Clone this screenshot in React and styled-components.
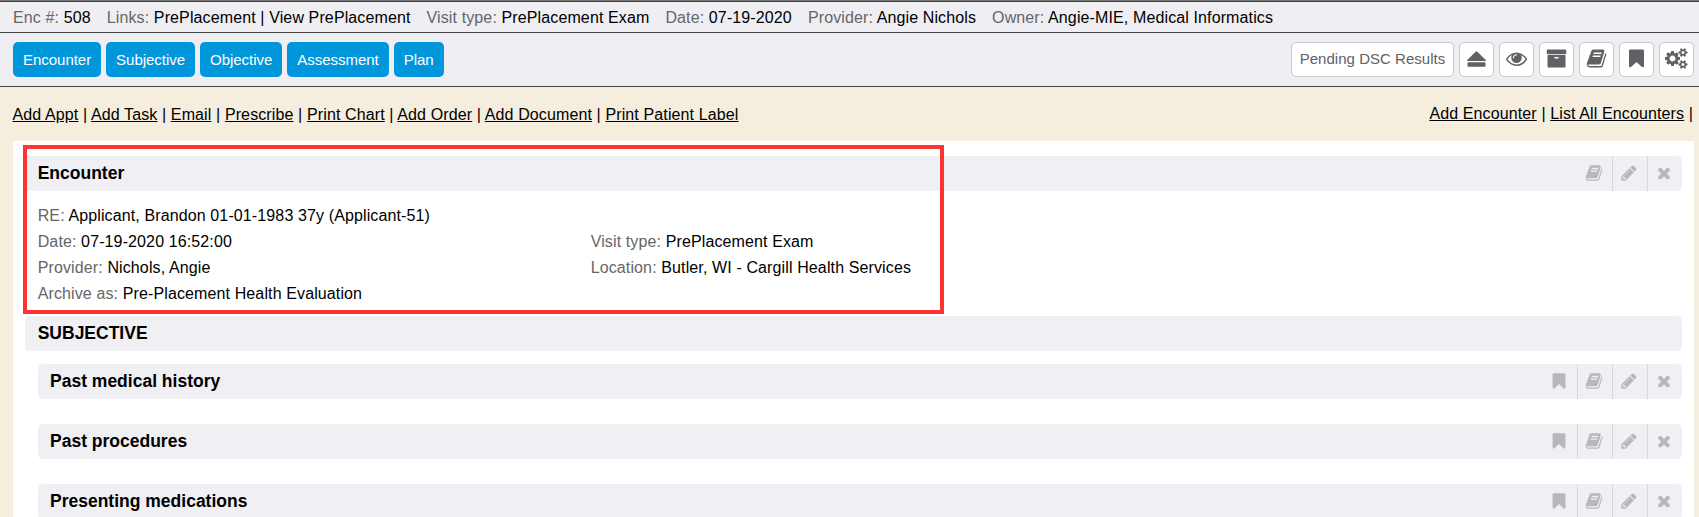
import React from "react";
import styled, { createGlobalStyle } from "styled-components";

const GlobalStyle = createGlobalStyle`
  * { box-sizing: border-box; }
  html, body { margin: 0; height: 100%; overflow: hidden; }
  body {
    background: #f5eddd;
    color: #000;
    font: 16px/26px Arial, "Liberation Sans", sans-serif;
    letter-spacing: 0.12px;
  }
`;

const Page = styled.div`
  position: relative;
  height: 517px;
  overflow: hidden;
`;

const InfoBar = styled.header`
  display: flex;
  gap: 16px;
  height: 33px;
  padding: 2px 13px 0;
  line-height: 30px;
  white-space: nowrap;
  background: #efeef3;
  border-top: 1px solid #777;
  border-bottom: 1px solid #444;
  box-shadow: inset 0 1px #444;
`;

const Label = styled.span`
  color: #666;
`;

const Toolbar = styled.nav`
  display: flex;
  justify-content: space-between;
  height: 54px;
  padding: 9px 5px 0 13px;
  background: #efeef3;
  border-bottom: 1px solid #444;
`;

const Group = styled.div`
  display: flex;
  gap: 5px;
`;

const Button = styled.button`
  height: 35px;
  padding: 0 10px;
  border: 0;
  border-radius: 5px;
  background: #0096db;
  color: #fff;
  font: 15px/35px Arial, "Liberation Sans", sans-serif;
  letter-spacing: -0.03px;
  white-space: nowrap;
`;

const OutlineButton = styled(Button)`
  display: flex;
  align-items: center;
  justify-content: center;
  width: ${(p) => p.$width || 35}px;
  padding: 0 0 2px;
  border: 1px solid #c8c8cc;
  background: #fff;
  color: #606164;
  letter-spacing: 0.03px;
  line-height: 33px;
`;

const LinkBar = styled.div`
  display: flex;
  justify-content: space-between;
  height: 54px;
  padding: 14px 6px 0 12.5px;
  white-space: nowrap;
`;

const LinkGroup = styled.div`
  padding-top: ${(p) => p.$drop || 0}px;
`;

const Link = styled.a`
  color: #000;
  text-decoration: underline;
`;

const Sheet = styled.main`
  height: 400px;
  margin: 0 5px 0 13px;
  padding: 15px 12px 0;
  background: #fff;
`;

const SectionHeader = styled.div`
  display: flex;
  justify-content: space-between;
  height: 35px;
  margin-left: ${(p) => (p.$nested ? 13 : 0)}px;
  margin-bottom: ${(p) => p.$after || 0}px;
  padding-left: ${(p) => (p.$nested ? 12 : 12.7)}px;
  border-radius: 5px;
  background: #f0eff4;
`;

const Title = styled.h2`
  margin: 0;
  font-size: 17.5px;
  line-height: 34px;
  letter-spacing: 0;
`;

const Actions = styled.div`
  display: flex;
`;

const Action = styled.span`
  display: flex;
  align-items: center;
  justify-content: center;
  width: 35px;
  padding: 0 2px 2px 0;
  color: #b8b7bc;

  & + & {
    border-left: 1px solid #d8d8dc;
  }
`;

const Details = styled.div`
  display: grid;
  grid-template-columns: 553px 1fr;
  grid-auto-rows: 26px;
  height: 125px;
  padding: 12px 13px 0 12.7px;
`;

const Field = styled.div`
  grid-column: ${(p) => (p.$wide ? "1 / -1" : "auto")};
  white-space: nowrap;
`;

const Highlight = styled.div`
  position: absolute;
  top: 145px;
  left: 23px;
  width: 921px;
  height: 169px;
  border: 4px solid #ff3333;
`;

const smallCog = "v140q0 16-149 31-12 27-30 52 51 113 51 138 0 4-4 7-122 71-124 71-8 0-46-47t-52-68q-20 2-30 2t-30-2q-14 21-52 68t-46 47q-2 0-124-71-4-3-4-7 0-25 51-138-18-25-30-52-149-15-149-31v-140q0-16 149-31 13-29 30-52-51-113-51-138 0-4 4-7 4-2 35-20t59-34 30-16q8 0 46 46.5t52 67.5q20-2 30-2t30 2q51-71 92-112l6-2q4 0 124 70 4 3 4 7 0 25-51 138 17 23 30 52 149 15 149 31z";

const paths = {
  eject: "M110 1024l711-711q31-31 75-31t75 31l711 711q31 31 19 57t-56 26h-1498q-44 0-56-26t19-57zM192 1216h1408q64 0 64 64v256q0 64-64 64h-1408q-64 0-64-64v-256q0-64 64-64z",
  eye: "M1664 960q-152-236-381-353 61 104 61 225 0 185-131.5 316.5t-316.5 131.5-316.5-131.5-131.5-316.5q0-121 61-225-229 117-381 353 133 205 333.5 326.5t434.5 121.5 434.5-121.5 333.5-326.5zm-720-384q0-20-14-34t-34-14q-125 0-214.5 89.5t-89.5 214.5q0 20 14 34t34 14 34-14 14-34q0-86 61-147t147-61q20 0 34-14t14-34zm848 384q0 34-20 69-140 230-376.5 368.5t-499.5 138.5-499.5-139-376.5-368q-20-35-20-69t20-69q140-229 376.5-368t499.5-139 499.5 139 376.5 368q20 35 20 69z",
  archive: "M1088 832q0-26-19-45t-45-19h-256q-26 0-45 19t-19 45 19 45 45 19h256q26 0 45-19t19-45zm576-192v960q0 26-19 45t-45 19h-1408q-26 0-45-19t-19-45v-960q0-26 19-45t45-19h1408q26 0 45 19t19 45zm64-448v256q0 26-19 45t-45 19h-1536q-26 0-45-19t-19-45v-256q0-26 19-45t45-19h1536q26 0 45 19t19 45z",
  book: "M1703 478q40 57 18 129l-275 906q-19 64-76.5 107.5t-122.5 43.5h-923q-77 0-148.5-53.5t-99.5-131.5q-24-67-2-127 0-4 3-27t4-37q1-8-3-21.5t-3-19.5q2-11 8-21t16.5-23.5 16.5-23.5q23-38 45-91.5t30-91.5q3-10 .5-30t-.5-28q3-11 17-28t17-23q21-36 42-92t25-90q1-9-2.5-32t.5-28q4-13 22-30.5t22-22.5q19-26 42.5-84.5t27.5-96.5q1-8-3-25.5t-2-26.5q2-8 9-18t18-23 17-21q8-12 16.5-30.5t15-35 16-36 19.5-32 26.5-23.5 36-11.5 47.5 5.5l-1 3q38-9 51-9h761q74 0 114 56t18 130l-274 906q-36 119-71.5 153.5t-128.5 34.5h-869q-27 0-38 15-11 16-1 43 24 70 144 70h923q29 0 56-15.5t35-41.5l300-987q7-22 5-57 38 15 59 43zm-1064 2q-4 13 2 22.5t20 9.5h608q13 0 25.5-9.5t16.5-22.5l21-64q4-13-2-22.5t-20-9.5h-608q-13 0-25.5 9.5t-16.5 22.5zm-83 256q-4 13 2 22.5t20 9.5h608q13 0 25.5-9.5t16.5-22.5l21-64q4-13-2-22.5t-20-9.5h-608q-13 0-25.5 9.5t-16.5 22.5z",
  bookmark: "M1420 128q23 0 44 9 33 13 52.5 41t19.5 62v1289q0 34-19.5 62t-52.5 41q-19 8-44 8-48 0-83-32l-441-424-441 424q-36 33-83 33-23 0-44-9-33-13-52.5-41t-19.5-62v-1289q0-34 19.5-62t52.5-41q21-9 44-9h1048z",
  cogs: "M832 896q0-106-75-181t-181-75-181 75-75 181 75 181 181 75 181-75 75-181zm768 512q0-52-38-90t-90-38-90 38-38 90q0 53 37.5 90.5t90.5 37.5 90.5-37.5 37.5-90.5zm0-1024q0-52-38-90t-90-38-90 38-38 90q0 53 37.5 90.5t90.5 37.5 90.5-37.5 37.5-90.5zm-384 421v185q0 10-7 19.5t-16 10.5l-155 24q-11 35-32 76 34 48 90 115 7 11 7 20 0 12-7 19-23 30-82.5 89.5t-78.5 59.5q-11 0-21-7l-115-90q-37 19-77 31-11 108-23 155-7 24-30 24h-186q-11 0-20-7.5t-10-17.5l-23-153q-34-10-75-31l-118 89q-7 7-20 7-11 0-21-8-144-133-144-160 0-9 7-19 10-14 41-53t47-61q-23-44-35-82l-152-24q-10-1-17-9.5t-7-19.5v-185q0-10 7-19.5t16-10.5l155-24q11-35 32-76-34-48-90-115-7-11-7-20 0-12 7-20 22-30 82-89t79-59q11 0 21 7l115 90q34-18 77-32 11-108 23-154 7-24 30-24h186q11 0 20 7.5t10 17.5l23 153q34 10 75 31l118-89q8-7 20-7 11 0 21 8 144 133 144 160 0 8-7 19-12 16-42 54t-45 60q23 48 34 82l152 23q10 2 17 10.5t7 19.5z" + "M1856 1338" + smallCog + "M1856 314" + smallCog,
  pencil: "M491 1536l91-91-235-235-91 91v107h128v128h107zm523-928q0-22-22-22-10 0-17 7l-542 542q-7 7-7 17 0 22 22 22 10 0 17-7l542-542q7-7 7-17zm-54-192l416 416-832 832h-416v-416zm683 96q0 53-37 90l-166 166-416-416 166-165q36-38 90-38 53 0 91 38l235 234q37 39 37 91z",
  times: "M1490 1322q0 40-28 68l-136 136q-28 28-68 28t-68-28l-294-294-294 294q-28 28-68 28t-68-28l-136-136q-28-28-28-68t28-68l294-294-294-294q-28-28-28-68t28-68l136-136q28-28 68-28t68 28l294 294 294-294q28-28 68-28t68 28l136 136q28 28 28 68t-28 68l-294 294 294 294q28 28 28 68z",
};

function Icon({ name, size }) {
  const wide = name === "cogs";
  const units = wide ? 1920 : 1792;
  return (
    <svg width={(size * units) / 1792} height={size} viewBox={`${wide ? -64 : 0} 0 ${units} 1792`} fill="currentColor" aria-hidden="true">
      <path d={paths[name]} />
    </svg>
  );
}

const visit = [
  ["Enc #:", "508"],
  ["Links:", "PrePlacement | View PrePlacement"],
  ["Visit type:", "PrePlacement Exam"],
  ["Date:", "07-19-2020"],
  ["Provider:", "Angie Nichols"],
  ["Owner:", "Angie-MIE, Medical Informatics"],
];
const jumps = ["Encounter", "Subjective", "Objective", "Assessment", "Plan"];
const tools = ["eject", "eye", "archive", "book", "bookmark", "cogs"];
const leftLinks = ["Add Appt", "Add Task", "Email", "Prescribe", "Print Chart", "Add Order", "Add Document", "Print Patient Label"];
const rightLinks = ["Add Encounter", "List All Encounters"];
const fields = [
  ["RE:", "Applicant, Brandon 01-01-1983 37y (Applicant-51)", true],
  ["Date:", "07-19-2020 16:52:00"],
  ["Visit type:", "PrePlacement Exam"],
  ["Provider:", "Nichols, Angie"],
  ["Location:", "Butler, WI - Cargill Health Services"],
  ["Archive as:", "Pre-Placement Health Evaluation", true],
];
const sections = ["Past medical history", "Past procedures", "Presenting medications"];

function Section({ title, icons = [], nested, after }) {
  return (
    <SectionHeader $nested={nested} $after={after}>
      <Title>{title}</Title>
      <Actions>
        {icons.map((name) => (
          <Action key={name}><Icon name={name} size={18} /></Action>
        ))}
      </Actions>
    </SectionHeader>
  );
}

export default function App() {
  return (
    <Page>
      <GlobalStyle />
      <InfoBar>
        {visit.map(([label, value]) => (
          <span key={label}><Label>{label}</Label> {value}</span>
        ))}
      </InfoBar>
      <Toolbar>
        <Group>{jumps.map((j) => <Button key={j}>{j}</Button>)}</Group>
        <Group>
          <OutlineButton $width={163}>Pending DSC Results</OutlineButton>
          {tools.map((t) => (
            <OutlineButton key={t} aria-label={t}><Icon name={t} size={21} /></OutlineButton>
          ))}
        </Group>
      </Toolbar>
      <LinkBar>
        <LinkGroup $drop={1}>
          {leftLinks.map((l, i) => (
            <React.Fragment key={l}>{i > 0 && " | "}<Link>{l}</Link></React.Fragment>
          ))}
        </LinkGroup>
        <LinkGroup>
          {rightLinks.map((l, i) => (
            <React.Fragment key={l}><Link>{l}</Link>{i === 0 ? " | " : " |"}</React.Fragment>
          ))}
        </LinkGroup>
      </LinkBar>
      <Sheet>
        <Section title="Encounter" icons={["book", "pencil", "times"]} />
        <Details>
          {fields.map(([label, value, wide]) => (
            <Field key={label} $wide={wide}><Label>{label}</Label> {value}</Field>
          ))}
        </Details>
        <Section title="SUBJECTIVE" after={13} />
        {sections.map((s) => (
          <Section key={s} title={s} icons={["bookmark", "book", "pencil", "times"]} nested after={25} />
        ))}
      </Sheet>
      <Highlight />
    </Page>
  );
}
